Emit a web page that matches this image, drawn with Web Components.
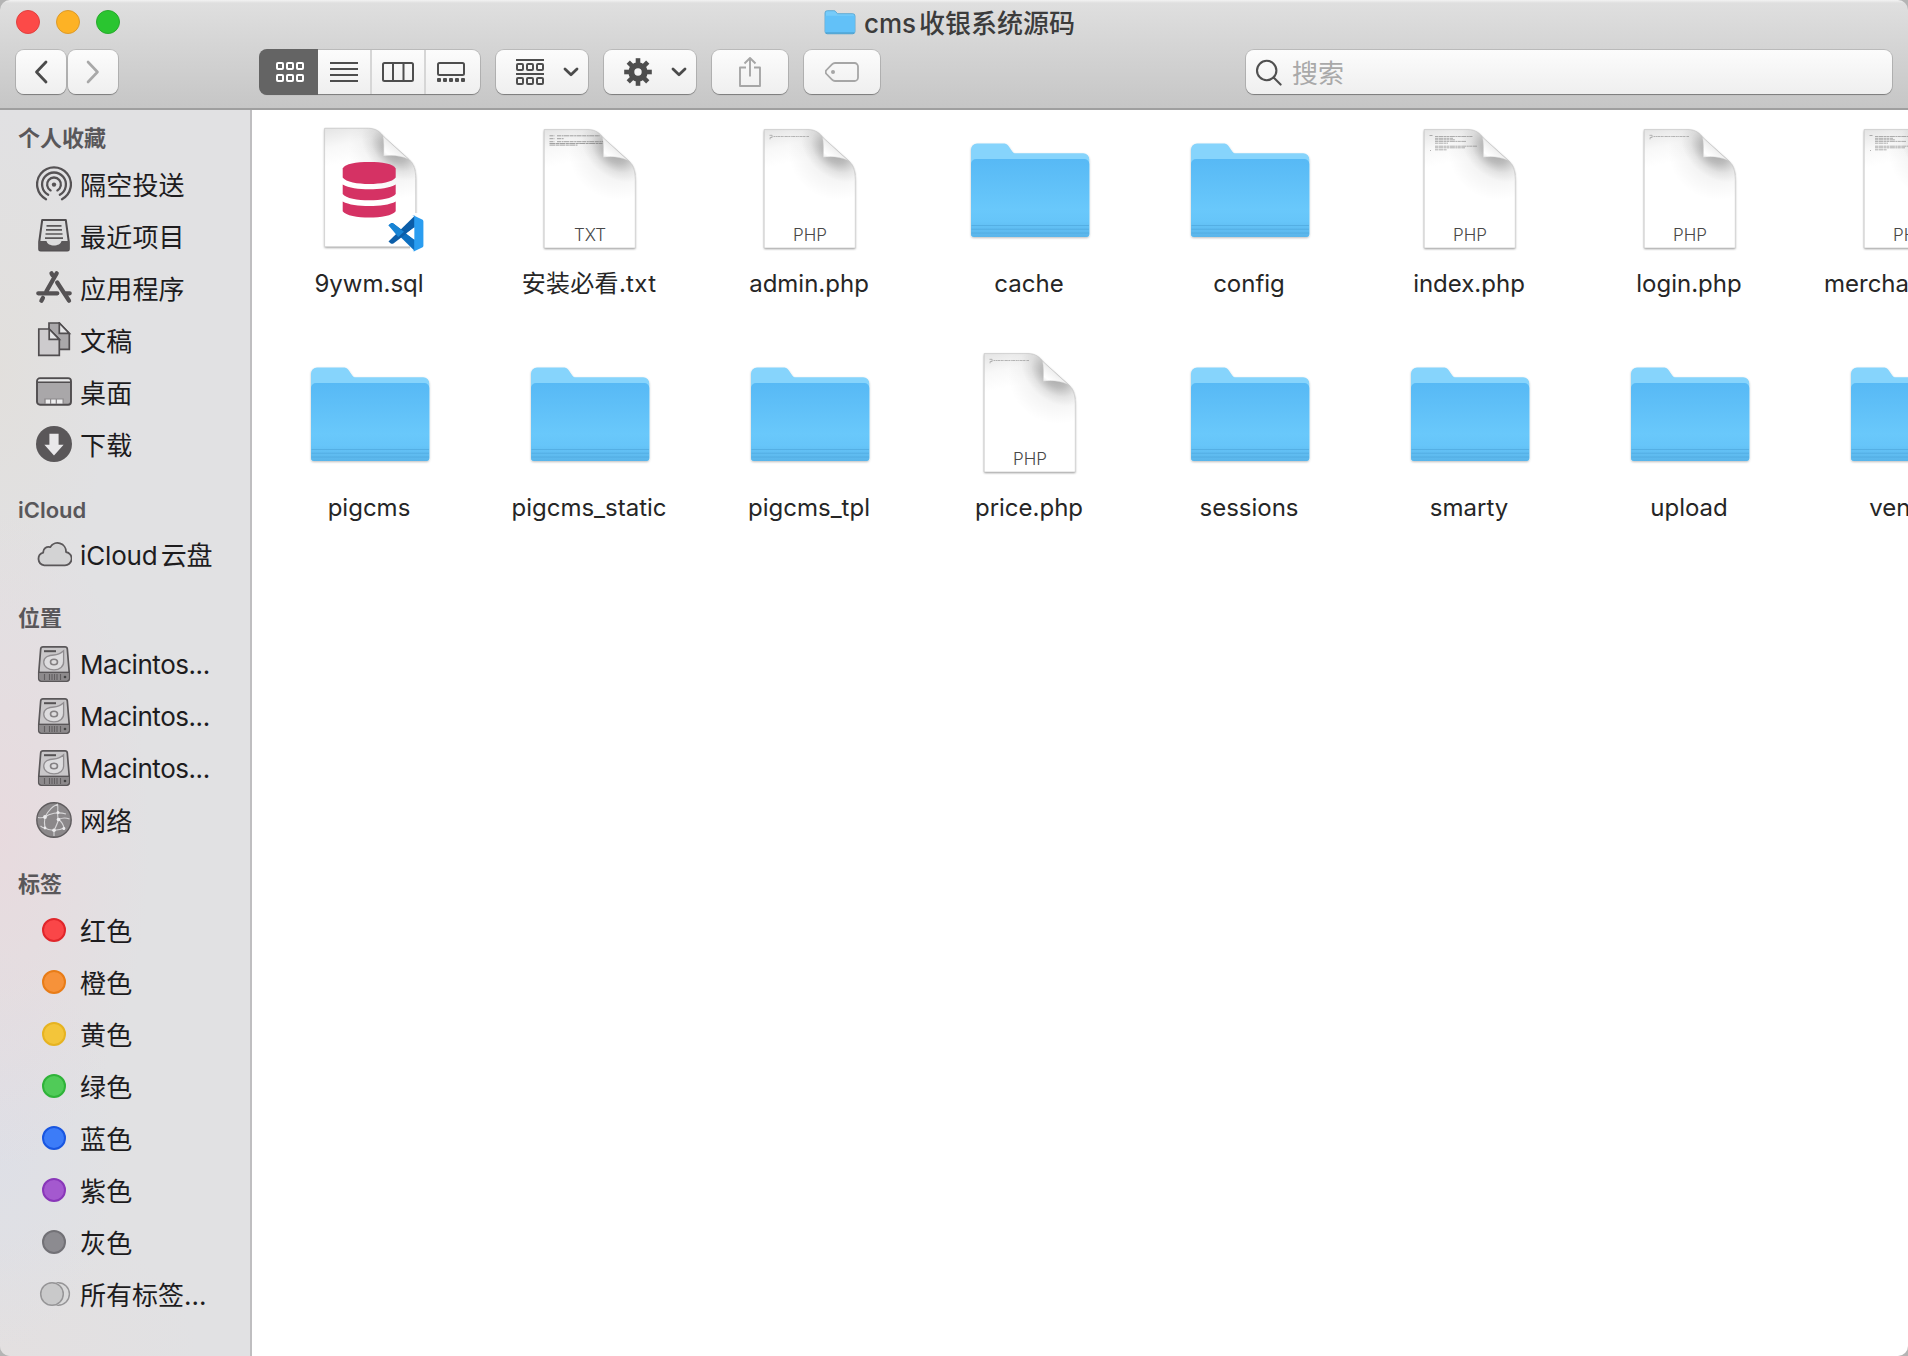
<!DOCTYPE html>
<html lang="zh-CN">
<head>
<meta charset="utf-8">
<title>cms 收银系统源码</title>
<style>
html, body { margin: 0; height: 100%; overflow: hidden; background: #b4b4b4; }
body { font-family: Inter, "Noto Sans CJK SC", sans-serif; }
</style>
</head>
<body>
<finder-window></finder-window>
<script>
const ICONS = {
  airdrop: `<g fill="none" stroke="#555254" stroke-width="2.300" stroke-linecap="round"><path d="M10 33.2A16.9 16.9 0 1 1 26 33.2"/><path d="M12.2 28.8A11.9 11.9 0 1 1 23.8 28.8"/><path d="M14.6 24.4A6.9 6.9 0 1 1 21.4 24.4"/></g><circle cx="18" cy="18.6" r="2.2" fill="#555254"/>`,
  recent: `<path d="M6.2 2h23.6l3 22v7a1.5 1.5 0 0 1-1.500 1.500H4.700a1.500 1.500 0 0 1-1.500-1.500v-7z" fill="#dcdcdd" stroke="#504d4f" stroke-width="2" stroke-linejoin="round"/><path d="M3 23h7.500c1 6 14 6 15 0H33v8a1.500 1.500 0 0 1-1.500 1.500h-27A1.500 1.500 0 0 1 3 31z" fill="#5b585a"/><path d="M10.500 7.800h15M10 11.900h16M9.500 16h17M9 20.100h18" stroke="#5b585a" stroke-width="1.700"/>`,
  apps: `<g fill="none" stroke="#555254" stroke-width="4.300" stroke-linecap="round"><path d="M20.700 3.300L10.300 21.500M6.900 28l-1.500 2.700M2.300 23.300h19M30 23.300h3.700"/><path d="M15.500 3.300l1.200 2M21.200 12.500L33 30.700"/></g>`,
  documents: `<g stroke="#504d4f" stroke-width="1.700" stroke-linejoin="miter"><path d="M13 1h10.300L33.300 11.500V27.300H13z" fill="#aaa8aa"/><path d="M23.300 1v10.300h10z" fill="#e6e6e7"/><path d="M2.800 7h10.400L23.300 17.300v16H2.800z" fill="#cdcbcd"/><path d="M13.200 7v10.300h10.100z" fill="#e6e6e7"/></g>`,
  desktop: `<rect x="1" y="4.300" width="34" height="26.400" rx="3" fill="#a9a7a9" stroke="#504d4f" stroke-width="1.900"/><path d="M3.500 5.300h29a1.800 1.800 0 0 1 1.500 1.800v.5H2v-.5a1.800 1.800 0 0 1 1.500-1.800z" fill="#e9e9ea"/><path d="M2 8.300h32" stroke="#504d4f" stroke-width="1.400"/><path d="M8.300 30v-5.500h19.400V30z" fill="#8b888a"/><path d="M9.700 25.500h4.300v4H9.700zM15.200 25.500h4.500v4h-4.500zM21 25.500h5.500v4H21z" fill="#eeeeef"/>`,
  download: `<circle cx="18" cy="18" r="18" fill="#5a5759"/><path d="M13.400 7.700h9.200v11h5L18 29.400 8.400 18.700h5z" fill="#e9e8ea"/>`,
  cloud: `<path d="M8.300 29.300h20.200a6.700 6.700 0 0 0 1.500-13.300A8.500 8.500 0 0 0 14.200 11.200 5.300 5.300 0 0 0 7.200 16.600 6.500 6.500 0 0 0 8.300 29.300z" fill="#d3d3d4" stroke="#5a5759" stroke-width="1.800" stroke-linejoin="round"/>`,
  disk: `<path d="M7 .9h22a2.300 2.300 0 0 1 2.300 2L33.200 26v6.800a2.300 2.300 0 0 1-2.300 2.300H5.100a2.300 2.300 0 0 1-2.300-2.300V26L4.700 2.900A2.300 2.300 0 0 1 7 .9z" fill="#c9c7c9" stroke="#5a5759" stroke-width="1.700"/><path d="M3.500 26.500h29v6.200a1.800 1.800 0 0 1-1.800 1.800H5.300a1.800 1.800 0 0 1-1.800-1.800z" fill="#8d8a8c"/><path d="M3 26.300h30" stroke="#555254" stroke-width="1.300"/><path d="M8 5.200h12" stroke="#555254" stroke-width="2"/><path d="M27.600 4.800v10.500c.5 5-4 8.600-9.600 8.600-5.700 0-10.300-3.200-10.300-7.800S12.300 9 18 9c3.500 0 6-1 9.600-4.200z" fill="#dddcde" stroke="#908d90" stroke-width="1.300"/><ellipse cx="18" cy="16" rx="3.500" ry="2.800" fill="#dddcde" stroke="#848183" stroke-width="1.600"/><path d="M8.500 28v6M13.500 28v6M16 28v6M18.500 28v6M21 28v6M24.500 28v6" stroke="#615e60" stroke-width="1.100"/><circle cx="29" cy="31" r="1.300" fill="#444"/>`,
  network: `<circle cx="18" cy="18" r="17.200" fill="#8b888a" stroke="#5f5c5e" stroke-width="1.400"/><g fill="none" stroke="#d6d5d7" stroke-width="1.100"><path d="M9 15C12 9 17 4 22 2M2 15.500c2 .3 5 .3 7-.5M9 15c-.8 4-.6 8 0 11M9 15c4-3.500 13-5.500 21-3M21.500 2c1 5-.5 8 .5 15.500M22.500 17.500c-1 4-3 8-4.500 11M22.500 17.500c4-2 7-2 11-.5M9 26c3 2 12 4 20-.5M18 28.500v5.500M22.500 17.500c3 2 5 5 5.500 9M9 26c-2 0-3-.5-4.500-2"/></g><g fill="#ecebed"><circle cx="9" cy="15" r="1.900"/><circle cx="22" cy="10.500" r="1.500"/><circle cx="22.500" cy="17.500" r="1.800"/><circle cx="18" cy="28.300" r="1.800"/><circle cx="9" cy="26" r="1.400"/><circle cx="27.800" cy="26.500" r="1.500"/></g>`,
  alltags: `<circle cx="22.200" cy="18" r="11.200" fill="#d9d9da" stroke="#969597" stroke-width="1.400"/><circle cx="16" cy="18" r="12.200" fill="#e1e1e3"/><circle cx="16" cy="18" r="11.300" fill="#c9c9ca" stroke="#969597" stroke-width="1.500"/>`,
};
const svg = (w, h, body, extra = '') => `<svg width="${w}" height="${h}" viewBox="0 0 ${w} ${h}" ${extra}>${body}</svg>`;

class UiElement extends HTMLElement {
  connectedCallback() {
    if (this.shadowRoot) return;
    this.attachShadow({ mode: 'open' }).innerHTML =
      `<style>*{box-sizing:border-box}svg{display:block;flex:none}${this.css()}</style>${this.html()}`;
  }
}

const FOLDER = `
<defs><linearGradient id="f" x1="0" y1="0" x2="0" y2="1"><stop offset="0" stop-color="#57b9f5"/><stop offset=".65" stop-color="#69c8fb"/><stop offset=".8" stop-color="#66c5f9"/><stop offset="1" stop-color="#5ab5ea"/></linearGradient>
<filter id="s" x="-10%" y="-10%" width="120%" height="125%"><feDropShadow dx="0" dy="1" stdDeviation="1.100" flood-opacity=".26"/></filter></defs>
<path d="M5 23.500a6 6 0 0 1 6-6h26c2.500 0 4 .6 5.500 2.600l3.800 5.300c.9 1.300 2 1.800 3.500 1.800h67.500a6 6 0 0 1 6 6V108a3 3 0 0 1-3 3H8a3 3 0 0 1-3-3z" fill="#86d4fc" filter="url(#s)"/>
<path d="M5 38a5 5 0 0 1 5-5h108.300a5 5 0 0 1 5 5V108a3 3 0 0 1-3 3H8a3 3 0 0 1-3-3z" fill="url(#f)"/>
<path d="M5.500 99.500h117.500M5.500 103.200h117.500M5.500 107h117.500" stroke="#4ba4da" stroke-width="1" opacity=".6"/>`;

const DEFS = `<defs>
<linearGradient id="cut" gradientUnits="userSpaceOnUse" x1="80" y1="35" x2="90" y2="22"><stop offset="0" stop-color="#e6e6e6"/><stop offset=".35" stop-color="#fff"/><stop offset="1" stop-color="#ececec"/></linearGradient>
<linearGradient id="top" gradientUnits="userSpaceOnUse" x1="30" y1="3" x2="38" y2="38"><stop offset="0" stop-color="#e6e6e6"/><stop offset=".5" stop-color="#f8f8f8"/><stop offset="1" stop-color="#fff"/></linearGradient>
<radialGradient id="sh" gradientUnits="userSpaceOnUse" cx="0" cy="0" r="1" gradientTransform="translate(88 25) rotate(41) scale(38 25)"><stop offset="0" stop-color="#000" stop-opacity=".3"/><stop offset=".4" stop-color="#000" stop-opacity=".2"/><stop offset=".7" stop-color="#000" stop-opacity=".06"/><stop offset="1" stop-color="#000" stop-opacity="0"/></radialGradient>
<radialGradient id="wide" gradientUnits="userSpaceOnUse" cx="92" cy="24" r="50"><stop offset="0" stop-color="#000" stop-opacity=".1"/><stop offset=".5" stop-color="#000" stop-opacity=".05"/><stop offset="1" stop-color="#000" stop-opacity="0"/></radialGradient>
<filter id="ds" x="-10%" y="-10%" width="120%" height="120%"><feDropShadow dx="0" dy="1" stdDeviation="1.300" flood-opacity=".4"/></filter></defs>`;
const PAGE_D = 'M18.200 3.600H62c8 0 12 4 15.500 8.500L103 35c4.500 4.500 6.300 10 6.300 19v68H18.200z';
const PAGE = `${DEFS}<path d="${PAGE_D}" fill="url(#top)" filter="url(#ds)"/><path d="${PAGE_D}" fill="url(#wide)"/><path d="${PAGE_D}" fill="url(#sh)"/><path d="${PAGE_D}" fill="none" stroke="#bdbdbd" stroke-width=".6"/>
<path d="M76.500 11.300c1 5 1.200 12 .7 19.900 9-1.200 17-.3 24.800 3.300z" fill="url(#cut)" stroke="#c9c9c9" stroke-width=".4"/>`;
const PREVIEW = {
  one: `<g stroke="#909090" stroke-width=".9" opacity=".7"><path d="M23.500 9.300h2.600v2.200h-2v1.800" fill="none"/><path d="M27.500 10.500h35.500" stroke-dasharray="2 .5 1 .4 3 .5"/></g>`,
  txt: `<g stroke="#666" stroke-width=".9" opacity=".65"><path d="M23.500 9.800h5M31 9.800h43M23.500 12.700h5M31 12.700h7M23.500 15.700h5M31 15.700h46" stroke-dasharray="4 .6 2 .4 5 .6"/><path d="M23.500 17.500h53M23.500 19.100h28" stroke-dasharray="6 .5 3 .4"/></g>`,
  code: `<g stroke="#777" stroke-width=".8" opacity=".7"><path d="M23.500 9.500h3M29 10.500h38M29 12.300h18M29 13.800h20M29 15.400h31M29 17.200h13M29 20.200h42M29 21.800h30M29 23.800h12M24 24.500h1" stroke-dasharray="3 .5 5 .5 2 .4"/></g>`,
};

customElements.define('file-icon', class extends UiElement {
  css() { return ':host{display:block;width:128px;height:128px}text{font-family:Inter,sans-serif;font-size:17px;font-weight:300;fill:#484848}'; }
  html() {
    const k = this.getAttribute('kind');
    if (k === 'folder') return svg(128, 128, FOLDER);
    if (k === 'sql') return svg(128, 128, `<g transform="translate(.4 -1.300)">${PAGE}</g>
<g fill="#d53264"><path d="M36.700 42.500C39 37.500 50 36 63.200 36s24.200 1.500 26.500 6.500v9c-3 4.500-15 6.500-26.500 6.500s-23.500-2-26.500-6.500z"/><path d="M36.700 58.500c6 3.500 16 4.800 26.500 4.800s20.500-1.300 26.500-4.800v9.500c-3 4.400-15 6.300-26.500 6.300s-23.500-1.900-26.500-6.300z"/><path d="M36.700 75.500c6 3.300 16 4.600 26.500 4.600s20.500-1.300 26.500-4.600v9.800c-3 4.400-15 6.300-26.500 6.300s-23.500-1.900-26.500-6.300z"/></g>
<path d="M104 90l5-3h8v40h-8l-5-2z" fill="#fff" opacity=".9"/>
<path d="M82.500 99.300l2.300-1.900c.8-.6 1.800-.6 2.600 0L109 114v11.300z" fill="#0d6fc0"/>
<path d="M82.500 115.500l2.300 1.900c.8.6 1.800.6 2.600 0L109 101V89.500z" fill="#0b5da8"/>
<path d="M82.500 99.300l2.300-1.900c.8-.6 1.800-.6 2.600 0L98 105.800l-5.800 5.200z" fill="#1783d4"/>
<path d="M108.800 90l7.300 3.400c.8.400 1.300 1.200 1.300 2v24.200c0 .9-.5 1.700-1.300 2l-7.300 3.500c-1 .4-2 .2-2.600-.5 1 .6 2-.1 2-1.200V91.200c0-1.100-1-1.800-2-1.200.6-.5 1.600-.6 2.600 0z" fill="#2a9df0"/><path d="M108.200 101.500v12l-8-6z" fill="#fff"/>`);
    return svg(128, 128, PAGE + PREVIEW[this.getAttribute('preview')] +
      `<text x="64" y="114.700" text-anchor="middle">${k.toUpperCase()}</text>`);
  }
});

customElements.define('file-item', class extends UiElement {
  css() { return `:host{display:flex;flex-direction:column;align-items:center;width:220px;height:224px;flex:none}
file-icon{margin-left:2px}
.name{margin-top:15px;height:30px;line-height:30px;font-size:24px;color:#262626;white-space:nowrap}
:host([preview=txt]) .name{letter-spacing:.3px}`; }
  html() { return `<file-icon kind="${this.getAttribute('kind')}" preview="${this.getAttribute('preview') || 'one'}"></file-icon><div class="name"><slot></slot></div>`; }
});

customElements.define('file-grid', class extends UiElement {
  css() { return `:host{display:flex;flex-direction:column;flex:1;min-width:0;overflow:hidden;background:#fff;padding:16px 0 0 7px}.row{display:flex}`; }
  html() {
    const rows = [
      [['sql', '9ywm.sql'], ['txt', '安装必看.txt', 'txt'], ['php', 'admin.php'], ['folder', 'cache'], ['folder', 'config'], ['php', 'index.php', 'code'], ['php', 'login.php'], ['php', 'merchants.php', 'code']],
      [['folder', 'pigcms'], ['folder', 'pigcms_static'], ['folder', 'pigcms_tpl'], ['php', 'price.php'], ['folder', 'sessions'], ['folder', 'smarty'], ['folder', 'upload'], ['folder', 'vendor']],
    ];
    return rows.map(r => `<div class="row">${r.map(([k, n, p]) => `<file-item kind="${k}" preview="${p || 'one'}">${n}</file-item>`).join('')}</div>`).join('');
  }
});

customElements.define('side-item', class extends UiElement {
  css() { return `:host{display:flex;align-items:center;height:52px;padding-left:36px;gap:8px}
.ic{width:36px;height:36px;display:flex;align-items:center;justify-content:center;flex:none}
.dot{width:24px;height:24px;border-radius:50%;background:var(--fill);border:2px solid var(--edge)}
.t{font-size:26px;line-height:36px;padding-top:3px;color:#1d1c1e;white-space:nowrap;letter-spacing:.2px;word-spacing:-4px}
:host([icon=disk]) .t{letter-spacing:-.45px;padding-top:2px}
:host([icon=cloud]) .t{letter-spacing:-.15px}
:host([icon=alltags]) .t{letter-spacing:0}`; }
  html() {
    const c = this.getAttribute('color');
    const ic = c ? `<span class="dot" style="--fill:${c.split(' ')[0]};--edge:${c.split(' ')[1]}"></span>` : svg(36, 36, ICONS[this.getAttribute('icon')]);
    return `<span class="ic">${ic}</span><span class="t"><slot></slot></span>`;
  }
});

customElements.define('side-group', class extends UiElement {
  css() { return `:host{display:flex;flex-direction:column}
.h{height:58px;padding:24px 0 0 18px;font-size:22px;line-height:28px;font-weight:600;color:#59575a}
:host([label=iCloud]) .h{padding-top:26px}
:host([first]) .h{height:48px;padding-top:14px}`; }
  html() { return `<div class="h">${this.getAttribute('label')}</div><slot></slot>`; }
});

customElements.define('side-bar', class extends UiElement {
  css() { return `:host{display:block;width:252px;flex:none;border-right:2px solid #bfbec0;
background:radial-gradient(ellipse 150px 330px at 0 730px,rgba(236,214,219,.6),rgba(236,214,219,0)),radial-gradient(ellipse 110px 260px at 0 260px,rgba(226,222,216,.6),rgba(226,222,216,0)),radial-gradient(ellipse 120px 200px at 0 1040px,rgba(220,222,232,.6),rgba(220,222,232,0)),radial-gradient(ellipse 200px 140px at 0 1246px,rgba(228,223,223,.7),rgba(228,223,223,0)),#e1e1e3}`; }
  html() {
    const tags = [['红色', '#fa4648 #e0262b'], ['橙色', '#f6923a #e87c17'], ['黄色', '#f3c53a #e6b321'], ['绿色', '#50cb58 #2fb339'], ['蓝色', '#3c7cf8 #1956e0'], ['紫色', '#a459cf #8937b9'], ['灰色', '#8c8b90 #727176']];
    return `<side-group first label="个人收藏"><side-item icon="airdrop">隔空投送</side-item><side-item icon="recent">最近项目</side-item><side-item icon="apps">应用程序</side-item><side-item icon="documents">文稿</side-item><side-item icon="desktop">桌面</side-item><side-item icon="download">下载</side-item></side-group>
<side-group label="iCloud"><side-item icon="cloud">iCloud 云盘</side-item></side-group>
<side-group label="位置"><side-item icon="disk">Macintos...</side-item><side-item icon="disk">Macintos...</side-item><side-item icon="disk">Macintos...</side-item><side-item icon="network">网络</side-item></side-group>
<side-group label="标签">${tags.map(([n, c]) => `<side-item color="${c}">${n}</side-item>`).join('')}<side-item icon="alltags">所有标签...</side-item></side-group>`;
  }
});

const SQ = (x, y) => `<rect x="${x + 1}" y="${y + 1}" width="6" height="6" rx="1"/>`;
const CHEV = svg(16, 10, '<path d="M2 2l6 5.700L14 2" fill="none" stroke="#4b4b4b" stroke-width="2.800" stroke-linecap="round" stroke-linejoin="round"/>');

customElements.define('tool-button', class extends UiElement {
  css() { return `:host{display:flex;align-items:center;height:44px;flex:none;border-radius:8px;background:linear-gradient(#fcfcfc,#efefef);box-shadow:0 0 0 1px rgba(0,0,0,.12),0 1px 1px rgba(0,0,0,.3)}`; }
  html() { return '<slot></slot>'; }
});

customElements.define('tool-bar', class extends UiElement {
  css() { return `:host{display:flex;flex-direction:column;height:110px;flex:none;border-bottom:2px solid #9f9f9f;background:linear-gradient(#f3f3f3 0,#dfdfdf 3px,#c6c6c6 100%)}
.title{display:flex;height:50px;padding:10px 0 0 16px;align-items:flex-start}
.light{width:24px;height:24px;border-radius:50%;margin-right:16px;background:var(--c);border:1px solid var(--e)}
.fold{margin:0 8px 0 688px}
.name{font-size:26px;line-height:30px;margin-top:-1px;color:#3c3c3c;word-spacing:-4px;font-weight:500;white-space:nowrap}
.tools{display:flex;height:44px;padding-left:16px}
.seg{width:220px;margin-left:142px;margin-right:16px}
.cell{display:flex;align-items:center;justify-content:center;height:44px;border-left:2px solid #d6d6d6}
.cell.on{height:46px;margin:0 0 0 -1px;width:59px;background:#646464;border:0;border-radius:8px 0 0 8px;padding-left:3px}
.search{width:646px;margin-left:366px;padding-left:9px;font-size:26px;color:#a9a9a9;gap:9px}
.search span{padding-bottom:1px}`; }
  html() {
    const g = (c) => `fill="none" stroke="${c}" stroke-width="2"`;
    return `<div class="title"><span class="light" style="--c:#fc4a48;--e:#e0403f"></span><span class="light" style="--c:#fdb225;--e:#dc9a2a"></span><span class="light" style="--c:#2ac530;--e:#28a92d"></span>
<svg class="fold" width="32" height="26" viewBox="0 0 32 26"><path d="M1 3a2.300 2.300 0 0 1 2.300-2.300h6.500c1 0 1.500.3 2 1l1.600 2h15.300A2.300 2.300 0 0 1 31 6v15.500a2.300 2.300 0 0 1-2.300 2.300H3.300A2.300 2.300 0 0 1 1 21.500z" fill="#76cbfa" stroke="#4b9fce" stroke-width=".8"/><path d="M1.400 5.700h29.200v15.600a2 2 0 0 1-2 2H3.400a2 2 0 0 1-2-2z" fill="#62c1f8"/><path d="M2 23h28" stroke="#4797c6"/></svg><span class="name">cms 收银系统源码</span></div>
<div class="tools">
<tool-button style="width:50px;margin-right:2px;padding-left:16.500px">${svg(16, 26, '<path d="M13 3L3.500 13 13 23" fill="none" stroke="#4b4b4b" stroke-width="2.800" stroke-linecap="round" stroke-linejoin="round"/>')}</tool-button>
<tool-button style="width:50px;padding-left:17px">${svg(16, 26, '<path d="M3 3l9.500 10L3 23" fill="none" stroke="#a8a8a8" stroke-width="2.600" stroke-linecap="round" stroke-linejoin="round"/>')}</tool-button>
<tool-button class="seg"><span class="cell on">${svg(28, 20, `<g ${g('#fff')}>${[0, 10, 20].map(x => SQ(x, 0) + SQ(x, 12)).join('')}</g>`)}</span>
<span class="cell" style="width:52px;border:0">${svg(28, 20, `<path d="M0 1h28M0 7h28M0 13h28M0 19h28" ${g('#4e4e4e')}/>`)}</span>
<span class="cell" style="width:54px">${svg(32, 20, `<g ${g('#4e4e4e')}><rect x="1" y="1" width="30" height="18" rx="1.500"/><path d="M11 1v18M21.500 1v18"/></g>`)}</span>
<span class="cell" style="width:56px;padding-right:5px">${svg(28, 20, `<rect x="1" y="1" width="26" height="12" rx="1.500" ${g('#4e4e4e')}/>${[0, 6, 12, 18, 24].map(x => `<rect x="${x}" y="16" width="4" height="4" rx="1" fill="#4e4e4e"/>`).join('')}`)}</span></tool-button>
<tool-button style="width:92px;margin-right:16px;padding-left:20px;gap:18.500px">${svg(28, 26, `<g ${g('#4e4e4e')}><path d="M0 1h28M0 15h28"/>${[0, 10, 20].map(x => SQ(x, 4) + SQ(x, 18)).join('')}</g>`)}${CHEV}</tool-button>
<tool-button style="width:92px;margin-right:16px;padding-left:20px;gap:18.500px">${svg(28, 28, `<g transform="translate(14 14)" stroke="#4e4e4e" fill="none"><circle r="6.700" stroke-width="6"/>${[0, 45, 90, 135, 180, 225, 270, 315].map(a => `<path d="M0-8.500V-13.800" stroke-width="4.600" transform="rotate(${a})"/>`).join('')}</g>`)}${CHEV}</tool-button>
<tool-button style="width:76px;margin-right:16px;padding-left:26px">${svg(24, 32, `<g fill="none" stroke="#a6a6a6" stroke-width="1.900" stroke-linejoin="round"><path d="M8 11.500H2v18.500h20V11.500h-6M12 20.500V2M6.500 7.500L12 2l5.500 5.500"/></g>`)}</tool-button>
<tool-button style="width:76px;padding-left:21px">${svg(34, 20, `<path d="M10 1h19.500a3.500 3.500 0 0 1 3.500 3.500v11a3.500 3.500 0 0 1-3.500 3.500H10c-1.200 0-2.200-.5-3-1.300L1.500 12a3 3 0 0 1 0-4L7 2.300C7.800 1.500 8.800 1 10 1z" fill="none" stroke="#a6a6a6" stroke-width="1.800"/><circle cx="8" cy="10" r="2" fill="#a6a6a6"/>`)}</tool-button>
<tool-button class="search">${svg(28, 28, '<g fill="none" stroke="#505050" stroke-width="2.100" stroke-linecap="round"><circle cx="11.700" cy="12.500" r="9.700"/><path d="M18.600 19.600l7 7"/></g>')}<span>搜索</span></tool-button>
</div>`;
  }
});

customElements.define('finder-window', class extends UiElement {
  css() { return `:host{display:flex;flex-direction:column;width:1908px;height:1356px;border-radius:10px;overflow:hidden}.body{display:flex;flex:1;min-height:0}`; }
  html() { return '<tool-bar></tool-bar><div class="body"><side-bar></side-bar><file-grid></file-grid></div>'; }
});
</script>
</body>
</html>
